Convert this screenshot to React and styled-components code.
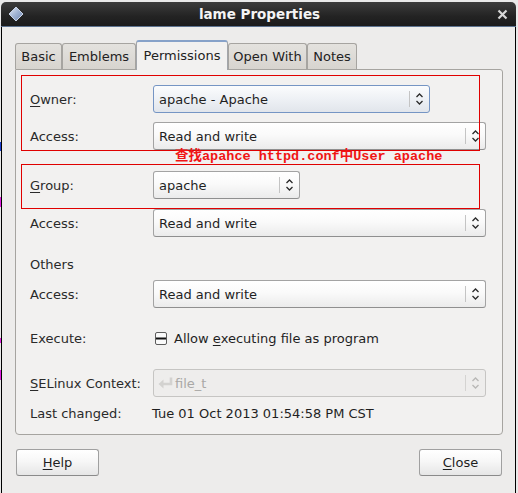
import React from "react";
import styled, { createGlobalStyle, css } from "styled-components";

const Global = createGlobalStyle`
  html, body { margin: 0; padding: 0; background: #e6e6e6; }
  body { font-family: "DejaVu Sans", "Liberation Sans", sans-serif; font-size: 13px; color: #1f1f1f; }
`;

const Page = styled.div`
  position: relative;
  width: 518px;
  height: 493px;
  overflow: hidden;
  box-sizing: border-box;
  padding: 2px 2px 0 1px;
  background: #e9e9e9;
`;

const Window = styled.div`
  width: 515px;
  height: 491px;
  display: flex;
  flex-direction: column;
`;

const TitleBar = styled.div`
  height: 24px;
  border-radius: 5px 5px 0 0;
  background: linear-gradient(#3c3c3c, #232323 60%, #1b1b1b);
  border-bottom: 1px solid #5d7390;
  display: grid;
  grid-template-columns: 28px 1fr 28px;
  align-items: center;
`;

const TitleText = styled.div`
  text-align: center;
  color: #f4f4f4;
  font-weight: bold;
  font-size: 13.5px;
  padding-left: 2px;
`;

const TitleIcon = styled.div`
  display: flex;
  justify-content: center;
  padding-left: 1px;
`;

const Body = styled.div`
  flex: 1;
  background: #edeceb;
  border-left: 1px solid #000;
  border-right: 1px solid #000;
  padding: 13px 12px 0 13px;
  display: flex;
  flex-direction: column;
`;

const TabStrip = styled.div`
  display: flex;
  align-items: flex-end;
  height: 29px;
  position: relative;
  z-index: 1;
`;

const Tab = styled.div`
  box-sizing: border-box;
  width: ${(p) => p.$w}px;
  height: 26px;
  border: 1px solid #a6a4a0;
  border-bottom: none;
  border-radius: 3px 3px 0 0;
  background: linear-gradient(#e4e2de, #d7d4cf);
  display: flex;
  align-items: center;
  justify-content: center;
  color: #222;
  ${(p) =>
    p.$active &&
    css`
      height: 30px;
      margin-bottom: -1px;
      background: #f2f1f0;
      border-color: #a3a6ab;
      border-top: 2px solid #87a2c9;
      padding-bottom: 2px;
    `}
`;

const Panel = styled.div`
  border: 1px solid #a6a4a0;
  border-radius: 0 3px 4px 4px;
  background: #f2f1f0;
  padding: 15px 16px 12px 14px;
  display: flex;
  flex-direction: column;
`;

const Row = styled.div`
  display: grid;
  grid-template-columns: 123px 1fr;
  align-items: center;
  height: ${(p) => p.$h || 28}px;
  margin-top: ${(p) => p.$mt || 0}px;
`;

const Label = styled.div`
  color: #2a2a2a;
  white-space: nowrap;
`;

const U = styled.span`
  text-decoration: underline;
  text-underline-offset: 2px;
`;

const Combo = styled.div`
  box-sizing: border-box;
  width: ${(p) => (p.$w ? `${p.$w}px` : "100%")};
  height: 28px;
  display: flex;
  align-items: center;
  border: 1px solid #a3a3a3;
  border-bottom-color: #8f8f8f;
  border-radius: 3px;
  background: linear-gradient(#ffffff, #fafafa 45%, #ebebeb);
  padding-left: 5px;
  color: #1f1f1f;
  ${(p) =>
    p.$focus &&
    css`
      border-color: #7595c4;
      background: linear-gradient(#fbfcfd, #eef1f5 50%, #e1e5eb);
    `}
  ${(p) =>
    p.$disabled &&
    css`
      border-color: #c6c5c3;
      background: #eeedec;
      color: #a9a8a6;
      padding-left: 3px;
    `}
`;

const ComboText = styled.div`
  flex: 1;
  display: flex;
  align-items: center;
  gap: 1px;
`;

const ComboSep = styled.div`
  width: 1px;
  align-self: stretch;
  margin: 5px 0;
  background: ${(p) => (p.$disabled ? "#d4d3d1" : "#c4c4c4")};
`;

const ComboArrow = styled.div`
  width: 19px;
  display: flex;
  justify-content: center;
  align-items: center;
`;

const Execute = styled.div`
  display: flex;
  align-items: center;
  gap: 7px;
  padding-left: 2px;
`;

const Value = styled.div`
  margin-left: -1px;
`;

const Buttons = styled.div`
  display: flex;
  justify-content: space-between;
  margin-top: 14px;
  padding: 0 1px;
`;

const Button = styled.div`
  box-sizing: border-box;
  width: 83px;
  height: 27px;
  border: 1px solid #a0a0a0;
  border-bottom-color: #8a8a8a;
  border-radius: 3px;
  background: linear-gradient(#ffffff, #f7f7f7 45%, #e6e6e6);
  display: flex;
  align-items: center;
  justify-content: center;
  color: #1f1f1f;
`;

const RedBox = styled.div`
  position: absolute;
  left: ${(p) => p.$x}px;
  top: ${(p) => p.$y}px;
  width: ${(p) => p.$w}px;
  height: ${(p) => p.$h}px;
  box-sizing: border-box;
  border: 1px solid #e00000;
  pointer-events: none;
`;

const Annotation = styled.div`
  position: absolute;
  left: 175px;
  top: 150px;
  line-height: 14px;
  font-family: "Liberation Mono", "Noto Sans CJK SC", monospace;
  font-weight: bold;
  font-size: 13.5px;
  color: #f01515;
  white-space: pre;
`;

const Speck = styled.div`
  position: absolute;
  left: 0;
  top: ${(p) => p.$y}px;
  width: 1px;
  height: ${(p) => p.$h}px;
  background: ${(p) => p.$c};
`;

const Chevrons = ({ color = "#2a2a2a" }) => (
  <svg width="9" height="14" viewBox="0 0 9 14">
    <path d="M1.5 5 L4.5 2 L7.5 5" fill="none" stroke={color} strokeWidth="1.3" />
    <path d="M1.5 9 L4.5 12 L7.5 9" fill="none" stroke={color} strokeWidth="1.3" />
  </svg>
);

const Select = ({ children, w, focus, disabled, icon }) => (
  <Combo $w={w} $focus={focus} $disabled={disabled}>
    <ComboText>
      {icon}
      {children}
    </ComboText>
    <ComboSep $disabled={disabled} />
    <ComboArrow>
      <Chevrons color={disabled ? "#b8b7b5" : "#2a2a2a"} />
    </ComboArrow>
  </Combo>
);

const ReturnIcon = () => (
  <svg width="17" height="14" viewBox="0 0 17 14">
    <path d="M14 1.5 V8 H5" fill="none" stroke="#d3d2d0" strokeWidth="2.6" />
    <path d="M6.5 3.5 L1.5 8 L6.5 12.5 Z" fill="#d3d2d0" />
  </svg>
);

const MixedCheck = () => (
  <svg width="12" height="13" viewBox="0 0 12 13">
    <rect x="0.5" y="0.5" width="11" height="12" rx="1.5" fill="#fafafa" stroke="#5c5c5c" />
    <rect x="1" y="5.5" width="10" height="2" fill="#111" />
  </svg>
);

const Diamond = () => (
  <svg width="16" height="16" viewBox="0 0 16 16">
    <defs>
      <linearGradient id="dg" x1="0" y1="0" x2="1" y2="1">
        <stop offset="0" stopColor="#e9eef7" />
        <stop offset="0.5" stopColor="#9fb2d3" />
        <stop offset="1" stopColor="#6f86b0" />
      </linearGradient>
    </defs>
    <polygon points="8,1 15,8 8,15 1,8" fill="url(#dg)" stroke="#c9d3e6" strokeWidth="1" />
  </svg>
);

const CloseX = () => (
  <svg width="11" height="11" viewBox="0 0 11 11">
    <path d="M1.5 1.5 L9.5 9.5 M9.5 1.5 L1.5 9.5" stroke="#d8d8d8" strokeWidth="2.2" />
  </svg>
);

const tabs = [
  { name: "Basic", w: 47 },
  { name: "Emblems", w: 74 },
  { name: "Permissions", w: 92, active: true },
  { name: "Open With", w: 79 },
  { name: "Notes", w: 50 },
];

export default function App() {
  return (
    <>
      <Global />
      <Page>
        <Window>
          <TitleBar>
            <TitleIcon>
              <Diamond />
            </TitleIcon>
            <TitleText>lame Properties</TitleText>
            <TitleIcon>
              <CloseX />
            </TitleIcon>
          </TitleBar>
          <Body>
            <TabStrip>
              {tabs.map((t) => (
                <Tab key={t.name} $w={t.w} $active={t.active}>
                  {t.name}
                </Tab>
              ))}
            </TabStrip>
            <Panel>
              <Row>
                <Label>
                  <U>O</U>wner:
                </Label>
                <Select w={277} focus>
                  apache - Apache
                </Select>
              </Row>
              <Row $mt={9}>
                <Label>Access:</Label>
                <Select>Read and write</Select>
              </Row>
              <Row $mt={21}>
                <Label>
                  <U>G</U>roup:
                </Label>
                <Select w={147}>apache</Select>
              </Row>
              <Row $mt={10}>
                <Label>Access:</Label>
                <Select>Read and write</Select>
              </Row>
              <Row $mt={17} $h={20}>
                <Label>Others</Label>
              </Row>
              <Row $mt={6}>
                <Label>Access:</Label>
                <Select>Read and write</Select>
              </Row>
              <Row $mt={20} $h={20}>
                <Label>Execute:</Label>
                <Execute>
                  <MixedCheck />
                  <span>
                    Allow <U>e</U>xecuting file as program
                  </span>
                </Execute>
              </Row>
              <Row $mt={21}>
                <Label>
                  <U>S</U>ELinux Context:
                </Label>
                <Select disabled icon={<ReturnIcon />}>
                  file_t
                </Select>
              </Row>
              <Row $mt={7} $h={18}>
                <Label>Last changed:</Label>
                <Value>Tue 01 Oct 2013 01:54:58 PM CST</Value>
              </Row>
            </Panel>
            <Buttons>
              <Button>
                <span>
                  <U>H</U>elp
                </span>
              </Button>
              <Button>
                <span>
                  <U>C</U>lose
                </span>
              </Button>
            </Buttons>
          </Body>
        </Window>
        <RedBox $x={21} $y={75} $w={459} $h={76} />
        <RedBox $x={21} $y={164} $w={459} $h={45} />
        <Annotation>查找apahce httpd.conf中User apache</Annotation>
        <Speck $y={142} $h={9} $c="#1d3fd0" />
        <Speck $y={197} $h={10} $c="#e020e0" />
        <Speck $y={338} $h={5} $c="#e020e0" />
        <Speck $y={370} $h={10} $c="#e020e0" />
      </Page>
    </>
  );
}
